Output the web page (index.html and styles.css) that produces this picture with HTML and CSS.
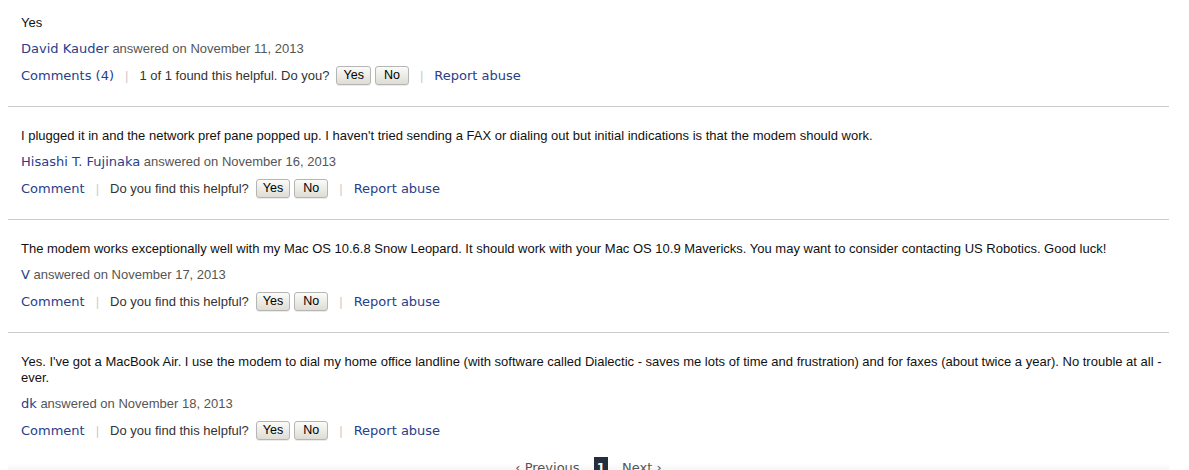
FILE: index.html
```html
<!DOCTYPE html>
<html lang="en">

<head>
    <meta charset="UTF-8">
    <title>Answers</title>
    <link rel="stylesheet" href="styles.css">
</head>

<body>
    <div class="answers">
        <div class="answer-list">
            <div class="answer">
                <p class="answer-text">Yes</p>
                <p class="byline"><a href="#">David Kauder</a> answered on November 11, 2013</p>
                <div class="actions">
                    <a href="#">Comments (4)</a>
                    <span class="sep">|</span>
                    <span>1 of 1 found this helpful. Do you?</span>
                    <button class="vote">Yes</button><button class="vote">No</button>
                    <span class="sep">|</span>
                    <a href="#">Report abuse</a>
                </div>
            </div>
            <div class="answer">
                <p class="answer-text">I plugged it in and the network pref pane popped up. I haven't tried sending a FAX or dialing out but initial indications is that the modem should work.</p>
                <p class="byline"><a href="#">Hisashi T. Fujinaka</a> answered on November 16, 2013</p>
                <div class="actions">
                    <a href="#">Comment</a>
                    <span class="sep">|</span>
                    <span>Do you find this helpful?</span>
                    <button class="vote">Yes</button><button class="vote">No</button>
                    <span class="sep">|</span>
                    <a href="#">Report abuse</a>
                </div>
            </div>
            <div class="answer">
                <p class="answer-text">The modem works exceptionally well with my Mac OS 10.6.8 Snow Leopard. It should work with your Mac OS 10.9 Mavericks. You may want to consider contacting US Robotics. Good luck!</p>
                <p class="byline"><a href="#">V</a> answered on November 17, 2013</p>
                <div class="actions">
                    <a href="#">Comment</a>
                    <span class="sep">|</span>
                    <span>Do you find this helpful?</span>
                    <button class="vote">Yes</button><button class="vote">No</button>
                    <span class="sep">|</span>
                    <a href="#">Report abuse</a>
                </div>
            </div>
            <div class="answer">
                <p class="answer-text">Yes. I've got a MacBook Air. I use the modem to dial my home office landline (with software called Dialectic - saves me lots of time and frustration) and for faxes (about twice a year). No trouble at all - ever.</p>
                <p class="byline"><a href="#">dk</a> answered on November 18, 2013</p>
                <div class="actions">
                    <a href="#">Comment</a>
                    <span class="sep">|</span>
                    <span>Do you find this helpful?</span>
                    <button class="vote">Yes</button><button class="vote">No</button>
                    <span class="sep">|</span>
                    <a href="#">Report abuse</a>
                </div>
            </div>
        </div>

        <div class="pagination">
            <a href="#" class="page-link">&lsaquo; Previous</a>
            <span class="page-current">1</span>
            <a href="#" class="page-link">Next &rsaquo;</a>
        </div>
    </div>
</body>

</html>
```

FILE: styles.css
```css
body {
    font-family: "Liberation Sans", Arial, sans-serif;
    font-size: 13px;
    color: #111;
    background-color: #fff;
    margin: 0;
    padding: 0;
    overflow: hidden;
}

a {
    color: #27408b;
    text-decoration: none;
    font-family: "DejaVu Sans", Verdana, sans-serif;
}

.answers {
    width: 1161px;
    margin-left: 8px;
}

.answer {
    padding: 21px 0 22px 13px;
    border-top: 1px solid #ccc;
}

.answer:first-child {
    padding-top: 15px;
    border-top: none;
}

.answer:last-child {
    padding-bottom: 0;
}

.answer p {
    margin: 0;
    line-height: 16px;
}

.answer-text {
    margin-bottom: 10px !important;
}

.byline {
    color: #555;
    margin-bottom: 9px !important;
}

.actions {
    display: flex;
    align-items: center;
    height: 18px;
    color: #333;
    font-size: 13px;
}

.sep {
    color: #ccc;
    margin: 0 11px;
}

.vote {
    font-family: "Liberation Sans", Arial, sans-serif;
    font-size: 12.5px;
    color: #000;
    min-width: 34px;
    height: 19px;
    padding: 0 6px;
    margin-left: 4px;
    border: 1px solid #b5b5b5;
    border-radius: 3px;
    background: linear-gradient(#fbfbf8, #dedcd3);
    box-shadow: 0 1px 0 rgba(0, 0, 0, 0.08);
    cursor: pointer;
}

.vote:first-of-type {
    margin-left: 7px;
}

.pagination {
    display: flex;
    justify-content: center;
    align-items: flex-start;
    gap: 14px;
    margin-top: 18px;
    height: 20px;
    background: linear-gradient(#fff 0, #fff 6px, #f6f6f6 13px);
}

.page-link {
    color: #555;
    font-size: 13px;
    line-height: 20px;
    margin-top: 1px;
}

.page-current {
    background-color: #232f3e;
    color: #fff;
    font-family: "DejaVu Sans", Verdana, sans-serif;
    font-size: 12px;
    font-weight: bold;
    padding: 2px 3px;
    line-height: 18px;
}
```
